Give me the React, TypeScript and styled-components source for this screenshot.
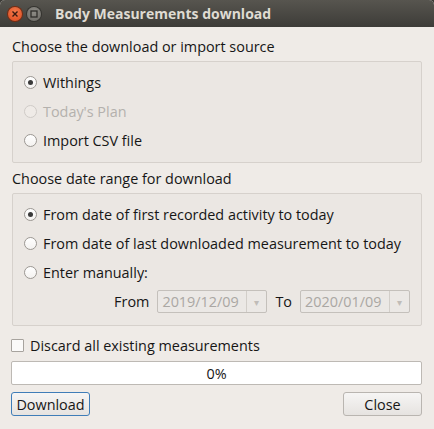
import styled, { createGlobalStyle } from "styled-components";

const Global = createGlobalStyle`
  html, body { margin: 0; padding: 0; background: #3c3b37; }
  body { font-family: "Open Sans", "Noto Sans", sans-serif; }
`;

export default function App() {
  return (
    <>
      <Global />
      <Window>
        <TitleBar>
          <WinButton $kind="close">
            <svg width="8" height="8" viewBox="0 0 8 8">
              <path d="M1.5 1.5 L6.5 6.5 M6.5 1.5 L1.5 6.5" stroke="#3a1a10" strokeWidth="1.4" />
            </svg>
          </WinButton>
          <WinButton $kind="max">
            <svg width="8" height="8" viewBox="0 0 8 8">
              <rect x="1" y="1" width="6" height="6" fill="none" stroke="#2e2d2a" strokeWidth="1.3" />
            </svg>
          </WinButton>
          <Title>Body Measurements download</Title>
        </TitleBar>
        <Body>
          <SectionLabel>Choose the download or import source</SectionLabel>
          <GroupBox $gap={10} $after={6}>
            <Radio checked label="Withings" />
            <Radio disabled label="Today's Plan" />
            <Radio label="Import CSV file" />
          </GroupBox>
          <SectionLabel>Choose date range for download</SectionLabel>
          <GroupBox $gap={10} $after={7}>
            <Radio checked label="From date of first recorded activity to today" />
            <Radio label="From date of last downloaded measurement to today" />
            <Radio label="Enter manually:" />
            <DateRow>
              <span>From</span>
              <Combo>
                <ComboText>2019/12/09</ComboText>
                <ComboArrow>▾</ComboArrow>
              </Combo>
              <span>To</span>
              <Combo>
                <ComboText>2020/01/09</ComboText>
                <ComboArrow>▾</ComboArrow>
              </Combo>
            </DateRow>
          </GroupBox>
          <CheckRow>
            <CheckBox />
            <span>Discard all existing measurements</span>
          </CheckRow>
          <Progress>0%</Progress>
          <ButtonRow>
            <Button $default>Download</Button>
            <Button>Close</Button>
          </ButtonRow>
        </Body>
      </Window>
    </>
  );
}

function Radio({ label, checked, disabled }: { label: string; checked?: boolean; disabled?: boolean }) {
  return (
    <RadioRow $disabled={disabled}>
      <RadioCircle $disabled={disabled}>{checked && <RadioDot />}</RadioCircle>
      <span>{label}</span>
    </RadioRow>
  );
}

const Window = styled.div`
  width: 434px;
  height: 429px;
  display: flex;
  flex-direction: column;
  background: #efebe7;
  overflow: hidden;
  border-radius: 5px 5px 0 0;
`;

const TitleBar = styled.div`
  height: 27px;
  flex-shrink: 0;
  display: flex;
  align-items: center;
  padding-left: 8px;
  gap: 5px;
  background: linear-gradient(#57554f, #3d3c38);
`;

const WinButton = styled.div<{ $kind: "close" | "max" }>`
  width: 14px;
  height: 14px;
  border-radius: 50%;
  display: flex;
  align-items: center;
  justify-content: center;
  background: ${(p) =>
    p.$kind === "close"
      ? "radial-gradient(circle at 50% 35%, #f27a4c, #e0491c)"
      : "radial-gradient(circle at 50% 35%, #8d8b85, #6b6964)"};
  box-shadow: 0 0 0 1px ${(p) => (p.$kind === "close" ? "#7a2b10" : "#34332f")};
`;

const Title = styled.div`
  margin-left: 9px;
  color: #dfdbd2;
  font-weight: 700;
  font-size: 14px;
  font-family: "Open Sans", "Noto Sans", sans-serif;
`;

const Body = styled.div`
  flex: 1;
  display: flex;
  flex-direction: column;
  padding: 10px 12px 0 11px;
  font-size: 14.4px;
  color: #161616;
`;

const SectionLabel = styled.div`
  padding-left: 1px;
  line-height: 20px;
  margin-bottom: 4px;
`;

const GroupBox = styled.div<{ $gap: number; $after: number }>`
  margin-left: 1px;
  border: 1px solid #d6d1cc;
  border-radius: 2px;
  background: #ebe7e3;
  display: flex;
  flex-direction: column;
  gap: ${(p) => p.$gap}px;
  padding: 11px 10px 12px 11px;
  margin-bottom: ${(p) => p.$after}px;
`;

const RadioRow = styled.div<{ $disabled?: boolean }>`
  display: flex;
  align-items: center;
  gap: 6px;
  height: 19px;
  color: ${(p) => (p.$disabled ? "#b4b1ad" : "#161616")};
`;

const RadioCircle = styled.div<{ $disabled?: boolean }>`
  width: 13px;
  height: 13px;
  border-radius: 50%;
  box-sizing: border-box;
  border: 1px solid ${(p) => (p.$disabled ? "#cfcbc7" : "#9c9893")};
  background: ${(p) => (p.$disabled ? "#efebe7" : "linear-gradient(#ffffff, #f4f2f0)")};
  display: flex;
  align-items: center;
  justify-content: center;
  flex-shrink: 0;
`;

const RadioDot = styled.div`
  width: 5px;
  height: 5px;
  border-radius: 50%;
  background: #3a3a3a;
`;

const DateRow = styled.div`
  display: flex;
  align-items: center;
  justify-content: flex-end;
  gap: 8px;
  padding-right: 1px;
  margin-top: -2px;
`;

const Combo = styled.div`
  width: 110px;
  height: 23px;
  box-sizing: border-box;
  border: 1px solid #c4c0bb;
  border-radius: 2px;
  background: #ebe8e5;
  display: flex;
  align-items: stretch;
`;

const ComboText = styled.div`
  flex: 1;
  display: flex;
  align-items: center;
  padding-left: 4px;
  color: #aaa7a3;
`;

const ComboArrow = styled.div`
  width: 19px;
  border-left: 1px solid #d2cec9;
  display: flex;
  align-items: center;
  justify-content: center;
  color: #c0bcb8;
  font-size: 10px;
`;

const CheckRow = styled.div`
  display: flex;
  align-items: center;
  gap: 6px;
  height: 20px;
  margin-top: 2px;
`;

const CheckBox = styled.div`
  width: 13px;
  height: 13px;
  box-sizing: border-box;
  border: 1px solid #a7a39e;
  border-radius: 1px;
  background: #fbfaf9;
`;

const Progress = styled.div`
  margin-top: 6px;
  height: 24px;
  box-sizing: border-box;
  border: 1px solid #bdb9b4;
  border-radius: 2px;
  background: #ffffff;
  display: flex;
  align-items: center;
  justify-content: center;
`;

const ButtonRow = styled.div`
  margin-top: 7px;
  display: flex;
  justify-content: space-between;
`;

const Button = styled.div<{ $default?: boolean }>`
  width: 79px;
  height: 24px;
  box-sizing: border-box;
  display: flex;
  align-items: center;
  justify-content: center;
  border-radius: 3px;
  border: 1px solid ${(p) => (p.$default ? "#3f7db8" : "#b9b5b0")};
  background: linear-gradient(#f6f5f4, #e6e3e0);
  color: #161616;
`;
